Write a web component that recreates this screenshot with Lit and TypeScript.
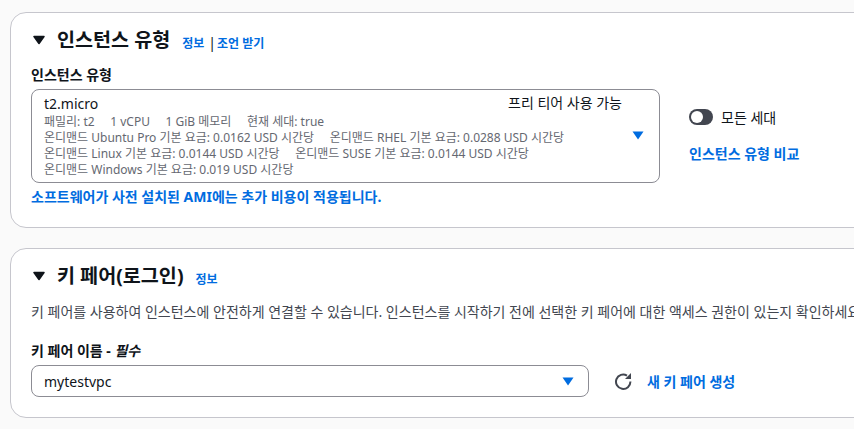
import { LitElement, html, css } from "lit";
import { customElement } from "lit/decorators.js";

const caret = html`<svg class="caret" width="12" height="10" viewBox="0 0 12 10"><path d="M1 1.5h10L6 8.5z" fill="currentColor" stroke="currentColor" stroke-width="1.5" stroke-linejoin="round"/></svg>`;
const down = html`<svg class="down" width="12" height="9" viewBox="0 0 12 9"><path d="M.5.5h11L6 8.5z" fill="currentColor"/></svg>`;

@customElement("app-root")
export class AppRoot extends LitElement {
  static styles = css`
    :host {
      display: block;
      width: 854px;
      height: 429px;
      overflow: hidden;
      background: #fafafa;
      font-family: "Noto Sans", "Noto Sans CJK KR", sans-serif;
      color: #0f141a;
      font-size: 14px;
    }
    .page { display: flex; flex-direction: column; gap: 20px; padding: 12px 0 0 10px; width: 920px; }
    .card { background: #fff; border: 1px solid #c6c6cd; border-radius: 16px; padding: 13px 20px 0; box-sizing: border-box; }
    .c1 { height: 216px; }
    .c2 { height: 170px; }
    .head { display: flex; align-items: center; height: 28px; }
    .caret { margin: 0 0 0 2px; color: #0f141a; }
    h2 { margin: 0 0 0 12px; font-size: 19.6px; font-weight: 700; line-height: 28px; }
    .info { color: #006ce0; font-size: 12px; font-weight: 700; margin-top: 6px; }
    .i1 { margin-left: 12px; }
    .sep { margin: 5px 1px 0 4px; font-size: 14px; }
    .label { font-weight: 700; font-size: 14px; line-height: 20px; }
    .l1 { margin-top: 11px; }
    .row { display: flex; }
    .select { position: relative; background: #fff; border: 1px solid #8c8c94; border-radius: 8px; box-sizing: border-box; }
    .s1 { width: 629px; height: 94px; margin-top: 4px; padding: 4px 12px; }
    .s1 .down { position: absolute; right: 15px; top: 41px; color: #006ce0; }
    .top { display: flex; font-size: 14px; line-height: 20px; height: 20px; }
    .free { position: absolute; left: 476px; top: 3px; font-size: 14px; line-height: 20px; }
    .d { color: #656871; font-size: 12px; line-height: 16px; white-space: pre; }
    .side { margin-left: 29px; margin-top: 20px; }
    .toggle-row { display: flex; align-items: center; gap: 8px; height: 24px; font-size: 14px; }
    .toggle { width: 24px; height: 16px; background: #424650; border-radius: 8px; position: relative; }
    .toggle::after { content: ""; position: absolute; left: 2px; top: 2px; width: 12px; height: 12px; border-radius: 50%; background: #fff; }
    .compare { display: block; margin-top: 15px; color: #006ce0; font-weight: 700; font-size: 14px; line-height: 20px; }
    .note { margin-top: 4px; color: #006ce0; font-weight: 700; font-size: 14px; line-height: 20px; }
    .desc { margin-top: 12px; font-size: 14px; line-height: 20px; color: #424650; white-space: nowrap; }
    .l2 { margin-top: 19px; }
    em { font-style: italic; }
    .s2 { width: 558px; height: 32px; margin-top: 4px; padding: 0 12px; display: flex; align-items: center; justify-content: space-between; font-size: 14px; }
    .s2 .down { color: #006ce0; margin-right: 2px; }
    .actions { display: flex; align-items: center; margin: 4px 0 0 25px; height: 32px; }
    .refresh { color: #424650; }
    .create { margin-left: 15px; color: #006ce0; font-weight: 700; font-size: 14px; }
  `;

  render() {
    return html`<div class="page">
      <section class="card c1">
        <div class="head">${caret}<h2>인스턴스 유형</h2><span class="info i1">정보</span><span class="sep">|</span><span class="info">조언 받기</span></div>
        <div class="label l1">인스턴스 유형</div>
        <div class="row">
          <div class="select s1">
            <div class="top">t2.micro</div>
            <div class="free">프리 티어 사용 가능</div>
            <div class="d">패밀리: t2     1 vCPU     1 GiB 메모리     현재 세대: true</div>
            <div class="d">온디맨드 Ubuntu Pro 기본 요금: 0.0162 USD 시간당     온디맨드 RHEL 기본 요금: 0.0288 USD 시간당</div>
            <div class="d">온디맨드 Linux 기본 요금: 0.0144 USD 시간당     온디맨드 SUSE 기본 요금: 0.0144 USD 시간당</div>
            <div class="d">온디맨드 Windows 기본 요금: 0.019 USD 시간당</div>
            ${down}
          </div>
          <div class="side">
            <div class="toggle-row"><span class="toggle"></span><span>모든 세대</span></div>
            <span class="compare">인스턴스 유형 비교</span>
          </div>
        </div>
        <div class="note">소프트웨어가 사전 설치된 AMI에는 추가 비용이 적용됩니다.</div>
      </section>
      <section class="card c2">
        <div class="head">${caret}<h2>키 페어(로그인)</h2><span class="info i1">정보</span></div>
        <div class="desc">키 페어를 사용하여 인스턴스에 안전하게 연결할 수 있습니다. 인스턴스를 시작하기 전에 선택한 키 페어에 대한 액세스 권한이 있는지 확인하세요.</div>
        <div class="label l2">키 페어 이름 - <em>필수</em></div>
        <div class="row">
          <div class="select s2"><span>mytestvpc</span>${down}</div>
          <div class="actions">
            <svg class="refresh" width="18" height="18" viewBox="0 0 18 18"><path d="M16.4 9.5A7.2 7.2 0 1 1 13 3.6" fill="none" stroke="currentColor" stroke-width="2"/><path d="M17 1v6h-6z" fill="currentColor"/></svg>
            <span class="create">새 키 페어 생성</span>
          </div>
        </div>
      </section>
    </div>`;
  }
}
